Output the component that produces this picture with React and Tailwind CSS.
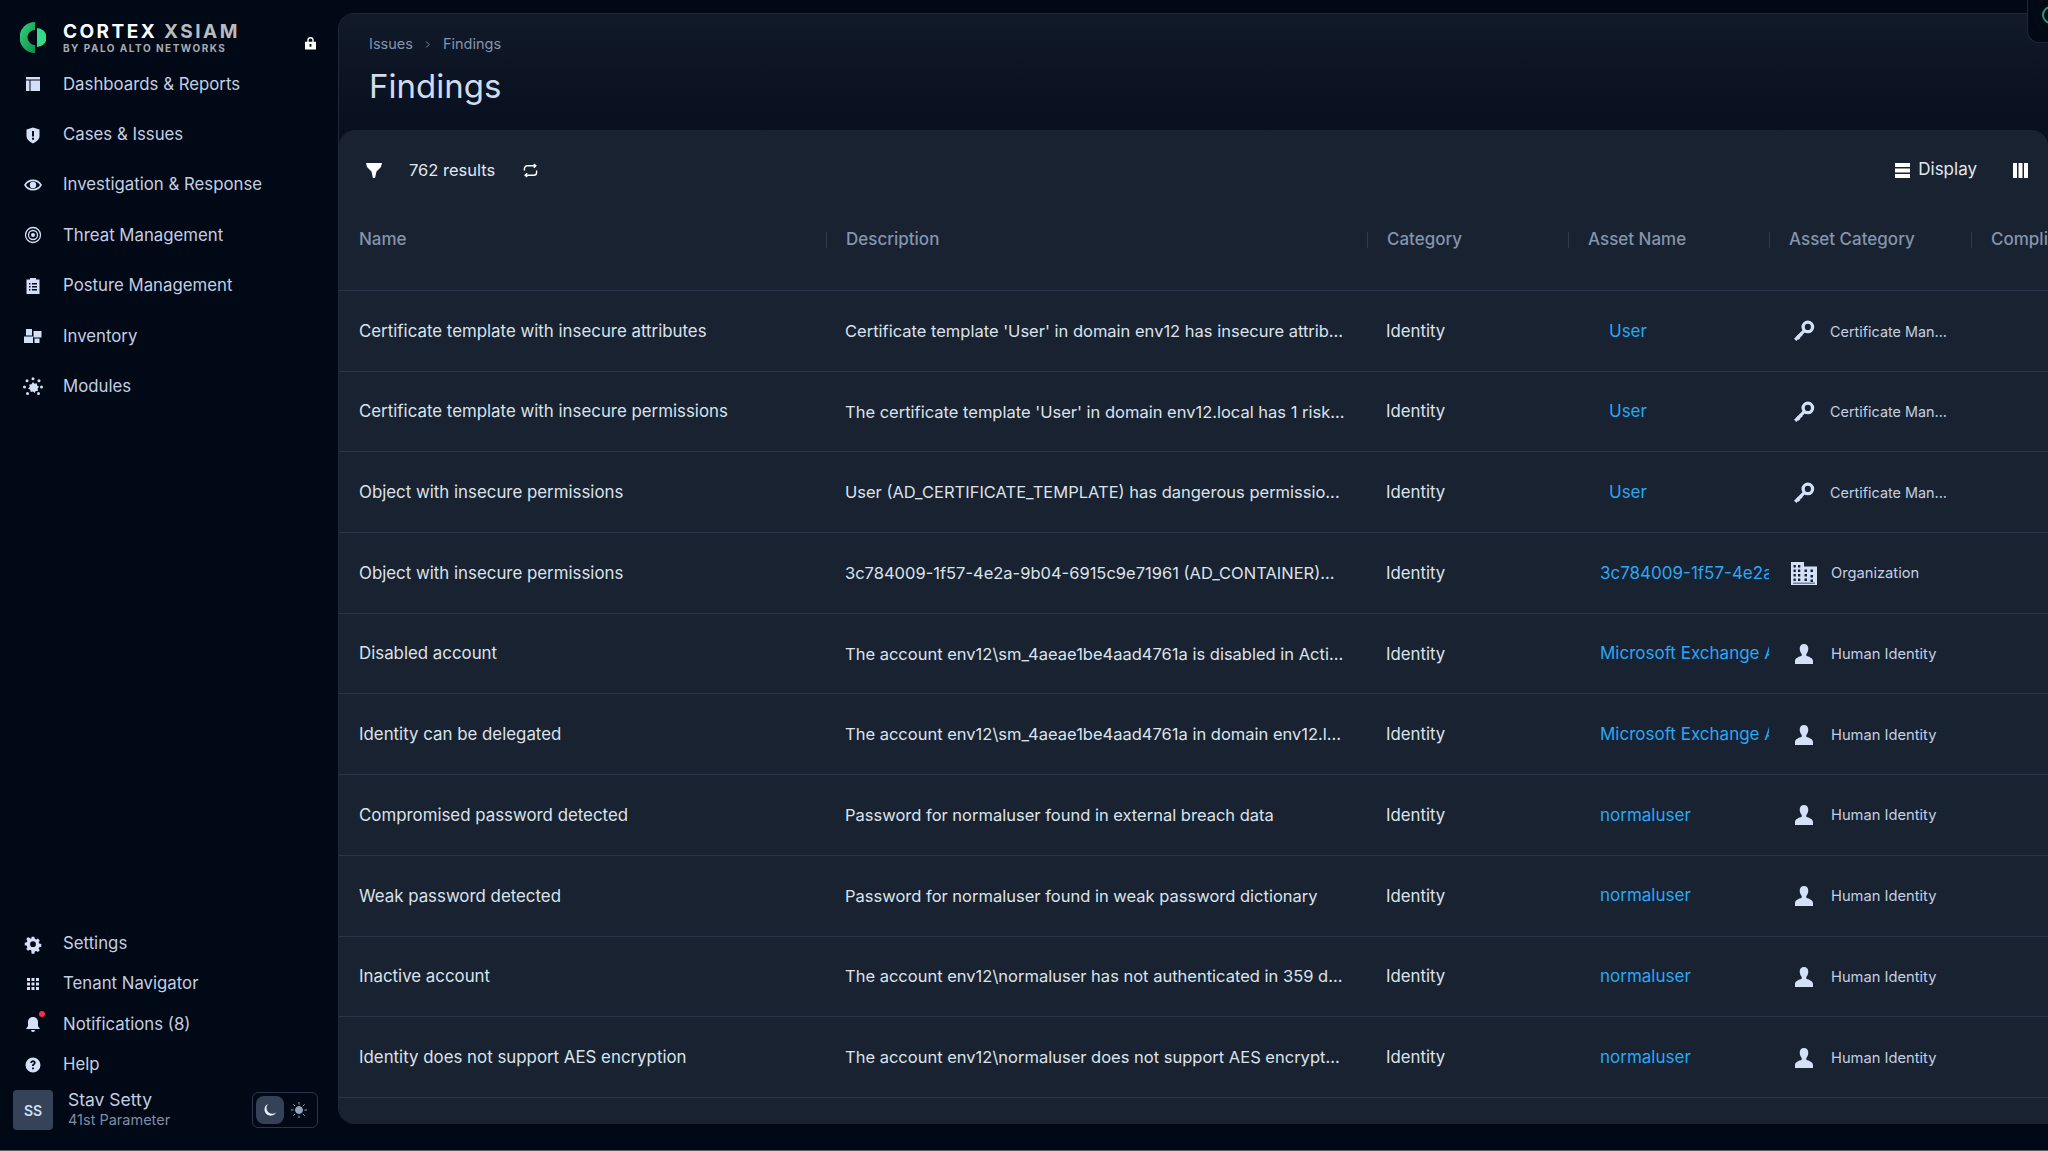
import React from "react";

const FONT = "font-['Inter','Liberation_Sans',sans-serif]";

const I = ({ children, className = "w-5 h-5", vb = "0 0 20 20" }) => (
  <svg viewBox={vb} className={className} fill="currentColor">
    {children}
  </svg>
);

const navTop = [
  {
    label: "Dashboards & Reports",
    icon: (
      <I>
        <path d="M3 3h14v2.500H3zM3 6.500h3.500V17H3zM7.500 6.500H17V17H7.500z" />
      </I>
    ),
  },
  {
    label: "Cases & Issues",
    icon: (
      <I>
        <path
          fillRule="evenodd"
          d="M10 2.500l6.500 2v6.500c0 3.500-3 5.500-6.500 7.500-3.500-2-6.500-4-6.500-7.500V4.500zM9 6h2v5.500H9zM9 12.800h2v2H9z"
        />
      </I>
    ),
  },
  {
    label: "Investigation & Response",
    icon: (
      <I>
        <path
          fillRule="evenodd"
          d="M1 10c2-3.800 5.200-5.500 9-5.500s7 1.700 9 5.500c-2 3.800-5.200 5.500-9 5.500S3 13.800 1 10zm2 0c1.700 2.600 4 3.800 7 3.800s5.300-1.200 7-3.800c-1.700-2.600-4-3.800-7-3.800S4.700 7.400 3 10z"
        />
        <circle cx="10" cy="10" r="3.200" />
      </I>
    ),
  },
  {
    label: "Threat Management",
    icon: (
      <I>
        <circle cx="10" cy="10" r="7.500" fill="none" stroke="currentColor" strokeWidth="1.300" />
        <circle cx="10" cy="10" r="4.500" fill="none" stroke="currentColor" strokeWidth="1.300" />
        <circle cx="10" cy="10" r="2" />
      </I>
    ),
  },
  {
    label: "Posture Management",
    icon: (
      <I>
        <path
          fillRule="evenodd"
          d="M7 2h6v1.500h3.500V18h-13V3.500H7zM6 7v1.500h1.500V7zm3 0v1.500h5V7zM6 10v1.500h1.500V10zm3 0v1.500h5V10zM6 13v1.500h1.500V13zm3 0v1.500h5V13z"
        />
      </I>
    ),
  },
  {
    label: "Inventory",
    icon: (
      <I>
        <path d="M3 9.500h6V3H3zM1 10.500h9V17H1zM10.500 5h8v6.500h-8zM11.500 12.500h5V17h-5z" />
      </I>
    ),
  },
  {
    label: "Modules",
    icon: (
      <I>
        <path d="M10 5l1.500 1.700 2.300-.5.300 2.300 2 1.200-1.500 1.800.5 2.300-2.300.2-1.300 2-1.500-1.500-2.300.5-.5-2.300-2-1.200 1.500-1.800-.5-2.300 2.300-.2z" />
        <circle cx="10" cy="1.800" r="1.500" />
        <circle cx="4" cy="3.800" r="1.500" />
        <circle cx="16" cy="3.800" r="1.500" />
        <circle cx="1.500" cy="10" r="1.500" />
        <circle cx="18.500" cy="10" r="1.500" />
        <circle cx="4.500" cy="16.500" r="1.500" />
        <circle cx="15.500" cy="16.500" r="1.500" />
      </I>
    ),
  },
];

const navBottom = [
  {
    label: "Settings",
    icon: (
      <I>
        <path
          fillRule="evenodd"
          d="M8.500 2h3l.5 2.300 1.500.7 2-1.200 2 2.200-1.200 2 .6 1.500 2.300.5v3l-2.300.5-.6 1.500 1.200 2-2 2-2-1.200-1.500.6-.5 2.300h-3L8 16.900l-1.500-.6-2 1.200-2-2 1.200-2-.6-1.500-2.300-.5v-3l2.300-.5.6-1.500-1.200-2 2-2.200 2 1.200L8 4.300zM10 7a3.200 3.200 0 100 6.400A3.200 3.200 0 0010 7z"
          transform="translate(1 1) scale(.9)"
        />
      </I>
    ),
  },
  {
    label: "Tenant Navigator",
    icon: (
      <I>
        <path d="M4 4h3v3H4zM8.500 4h3v3h-3zM13 4h3v3h-3zM4 8.500h3v3H4zM8.500 8.500h3v3h-3zM13 8.500h3v3h-3zM4 13h3v3H4zM8.500 13h3v3h-3zM13 13h3v3h-3z" />
      </I>
    ),
  },
  {
    label: "Notifications (8)",
    dot: true,
    icon: (
      <I>
        <path d="M10 3c3 0 5 2.200 5 5v4l2 3H3l2-3V8c0-2.800 2-5 5-5zM8 16h4a2 2 0 01-4 0z" />
      </I>
    ),
  },
  {
    label: "Help",
    icon: (
      <I>
        <path
          fillRule="evenodd"
          d="M10 2.500a7.500 7.500 0 110 15 7.500 7.500 0 010-15zM7.300 8h1.800c0-.6.400-1 .9-1s.9.300.9.800c0 1-2 1.200-2 3.200h1.800c0-1.400 2-1.600 2-3.300C12.700 6.200 11.500 5.300 10 5.300S7.400 6.300 7.300 8zm1.800 4.500v1.800h1.800v-1.800z"
        />
      </I>
    ),
  },
];

const KeyIcon = () => (
  <svg viewBox="0 0 20 20" className="w-[22px] h-[22px]" fill="none" stroke="currentColor">
    <circle cx="13.500" cy="6.300" r="4.300" strokeWidth="3" />
    <path d="M10.500 9.500L2 18" strokeWidth="3" />
    <path d="M3.500 14.500l2.500 2.500M6 12.500l2 2" strokeWidth="2.500" />
  </svg>
);

const OrgIcon = () => (
  <svg viewBox="0 0 26 23" className="w-[26px] h-[23px]" fill="currentColor">
    <path
      fillRule="evenodd"
      d="M0 0h13v4.500h13V23H0zM2.500 3v2.500h2.300V3zm4.500 0v2.500h2.300V3zM2.500 7.500V10h2.300V7.500zm4.500 0V10h2.300V7.500zm6.500 0V10h2.500V7.500zm6 0V10H22V7.500zM2.500 12v2.500h2.300V12zm4.500 0v2.500h2.300V12zm6.500 0v2.500h2.500V12zm6 1v2.500H22V13zM2.500 16.500V19h2.300v-2.500zm4.500 0V19h2.300v-2.500zm6.500 0V19h2.500v-2.500zm6 1V20H22v-2.500zM2 20.800v.700h22v-.700z"
    />
  </svg>
);

const PersonIcon = () => (
  <svg viewBox="0 0 20 20" className="w-[20px] h-[20px]" fill="currentColor">
    <path d="M10 0c2.700 0 4.300 2 4.300 4.700 0 2.200-1 4-2 5.200v1.800c2.700 1 6.700 2.300 6.700 5.300V20H1v-3c0-3 4-4.300 6.700-5.300V9.900c-1-1.200-2-3-2-5.200C5.700 2 7.300 0 10 0z" />
  </svg>
);

const columns = [
  { label: "Name", w: "w-[487px]" },
  { label: "Description", w: "w-[541px]" },
  { label: "Category", w: "w-[201px]" },
  { label: "Asset Name", w: "w-[201px]" },
  { label: "Asset Category", w: "w-[202px]" },
  { label: "Compliance", w: "w-[200px]" },
];

const rows = [
  ["Certificate template with insecure attributes", "Certificate template 'User' in domain env12 has insecure attrib...", "User", "key", "Certificate Man..."],
  ["Certificate template with insecure permissions", "The certificate template 'User' in domain env12.local has 1 risk...", "User", "key", "Certificate Man..."],
  ["Object with insecure permissions", "User (AD_CERTIFICATE_TEMPLATE) has dangerous permissio...", "User", "key", "Certificate Man..."],
  ["Object with insecure permissions", "3c784009-1f57-4e2a-9b04-6915c9e71961 (AD_CONTAINER)...", "3c784009-1f57-4e2a-9b04-6915c9e71961", "org", "Organization"],
  ["Disabled account", "The account env12\\sm_4aeae1be4aad4761a is disabled in Acti...", "Microsoft Exchange Approval Assistant", "person", "Human Identity"],
  ["Identity can be delegated", "The account env12\\sm_4aeae1be4aad4761a in domain env12.l...", "Microsoft Exchange Approval Assistant", "person", "Human Identity"],
  ["Compromised password detected", "Password for normaluser found in external breach data", "normaluser", "person", "Human Identity"],
  ["Weak password detected", "Password for normaluser found in weak password dictionary", "normaluser", "person", "Human Identity"],
  ["Inactive account", "The account env12\\normaluser has not authenticated in 359 d...", "normaluser", "person", "Human Identity"],
  ["Identity does not support AES encryption", "The account env12\\normaluser does not support AES encrypt...", "normaluser", "person", "Human Identity"],
];

const NavItem = ({ item, h }) => (
  <div className={`flex items-center pl-[23px] ${h} text-[#c3cfe2]`}>
    <div className="relative w-[20px] h-[20px] mr-[20px] text-[#d3e0f5] flex items-center justify-center">
      {item.icon}
      {item.dot && <div className="absolute -top-[3px] right-[-2px] w-[6px] h-[6px] rounded-full bg-[#f5304f]" />}
    </div>
    <span className="text-[16.800px]">{item.label}</span>
  </div>
);

const Logo = () => (
  <div className="flex items-start pl-[20px] pt-[22px] h-[59px]">
    <svg viewBox="0 0 26 31" className="w-[26px] h-[31px] mr-[17px]">
      <defs>
        <linearGradient id="lg" x1="0" y1="0" x2="1" y2="1">
          <stop offset="0" stopColor="#34d27b" />
          <stop offset="1" stopColor="#0f8f4c" />
        </linearGradient>
      </defs>
      <path d="M15 0v8a7.500 7.500 0 000 15v8A15.500 15.500 0 0115 0z" fill="url(#lg)" />
      <path d="M17 6a9.500 9.500 0 010 19z" fill="#35d987" />
    </svg>
    <div className="flex flex-col leading-none font-bold">
      <div className="text-[19px] tracking-[2.450px] leading-[19px] text-white whitespace-nowrap">
        CORTEX <span className="text-[#b9bcbf]">XSIAM</span>
      </div>
      <div className="text-[10px] tracking-[1.500px] text-[#a8abb0] mt-[2px] whitespace-nowrap">BY PALO ALTO NETWORKS</div>
    </div>
    <svg viewBox="0 0 12 14" className="w-[11px] h-[14px] text-white ml-auto mr-[22px] mt-[14px]" fill="currentColor">
      <path
        fillRule="evenodd"
        d="M2.500 5.500V4a3.500 3.500 0 017 0v1.500H12V14H0V5.500zM4 5.500h4V4a2 2 0 00-4 0zM5 8v3h2V8z"
      />
    </svg>
  </div>
);

const Sidebar = () => (
  <div className="w-[338px] shrink-0 flex flex-col">
    <Logo />
    <div>
      {navTop.map((item) => (
        <NavItem key={item.label} item={item} h="h-[50.400px]" />
      ))}
    </div>
    <div className="mt-auto">
      {navBottom.map((item) => (
        <NavItem key={item.label} item={item} h="h-[40.400px]" />
      ))}
      <div className="flex items-center pl-[13px] h-[42px] mb-[19px] mt-[4px]">
        <div className="w-[40px] h-[40px] rounded-[4px] bg-[#354359] text-[#d3e0f5] text-[14px] font-semibold flex items-center justify-center">
          SS
        </div>
        <div className="ml-[15px] w-[184px]">
          <div className="text-[17.500px] leading-[20px] text-[#c3cfe2]">Stav Setty</div>
          <div className="text-[14.500px] leading-[20px] text-[#7f8da3]">41st Parameter</div>
        </div>
        <div className="w-[66px] h-[36px] rounded-[6px] border border-[#29354a] flex items-center p-[3px]">
          <div className="w-[28px] h-[28px] rounded-[8px] bg-[#344157] flex items-center justify-center text-[#e8effa]">
            <svg viewBox="0 0 16 16" className="w-[14px] h-[14px]" fill="currentColor">
              <path d="M6 1a7 7 0 109 9.500A6.500 6.500 0 016 1z" />
            </svg>
          </div>
          <div className="flex-1 flex items-center justify-center text-[#94a3b8]">
            <svg viewBox="0 0 16 16" className="w-[16px] h-[16px]" fill="none" stroke="currentColor" strokeWidth="1">
              <circle cx="8" cy="8" r="3.500" fill="currentColor" />
              <path d="M8 0v2.500M8 13.500V16M0 8h2.500M13.500 8H16M2.300 2.300l1.800 1.800M11.900 11.900l1.800 1.800M2.300 13.700l1.800-1.800M11.900 4.100l1.800-1.800" />
            </svg>
          </div>
        </div>
      </div>
    </div>
  </div>
);

const Toolbar = () => (
  <div className="flex items-center h-[80px] pl-[27px] pr-[20px] text-[#e2e8f0]">
    <svg viewBox="0 0 16 15" className="w-[16px] h-[15px] text-white" fill="currentColor">
      <path d="M0 0h16L15 4l-4.500 4.500L9 15l-2 .5L5.500 8.500 1 4z" />
    </svg>
    <span className="ml-[27px] text-[16.500px]">762 results</span>
    <svg viewBox="0 0 16 16" className="w-[15px] h-[15px] ml-[28px] text-white" fill="none" stroke="currentColor" strokeWidth="1.500">
      <path d="M1.500 8V6a3 3 0 013-3h9M11.500 1l2.200 2-2.200 2M14.500 8v2a3 3 0 01-3 3h-9M4.500 15l-2.200-2 2.200-2" />
    </svg>
    <div className="ml-auto flex items-center text-white">
      <svg viewBox="0 0 15 15" className="w-[15px] h-[15px]" fill="currentColor">
        <path d="M0 0h15v4H0zM0 5.500h15v4H0zM0 11h15v4H0z" />
      </svg>
      <span className="ml-[8px] text-[17px] text-[#e2e8f0]">Display</span>
      <svg viewBox="0 0 15 15" className="w-[15px] h-[15px] ml-[36px]" fill="currentColor">
        <path d="M0 0h4v15H0zM5.500 0h4v15h-4zM11 0h4v15h-4z" />
      </svg>
    </div>
  </div>
);

const Row = ({ r }) => (
  <div className="flex h-[80.700px] pt-[1px] items-center border-b border-[#2a3549] text-[#dbe2ec]">
    <div className={`${columns[0].w} shrink-0 pl-[20px] truncate text-[16.850px]`}>{r[0]}</div>
    <div className={`${columns[1].w} shrink-0 pl-[19px] whitespace-nowrap overflow-hidden text-[16.500px]`}>{r[1]}</div>
    <div className={`${columns[2].w} shrink-0 pl-[19px] text-[16.800px]`}>Identity</div>
    <div className={`${columns[3].w} shrink-0 pl-[32px] whitespace-nowrap overflow-hidden text-[#2aa7f5] text-[17px]`}>
      <span className={r[2] === "User" ? "pl-[9px]" : ""}>{r[2]}</span>
    </div>
    <div className={`${columns[4].w} shrink-0 pl-[20px] flex items-center text-[#d3e0f5]`}>
      <div className="w-[30px] flex justify-center">
        {r[3] === "key" ? <KeyIcon /> : r[3] === "org" ? <OrgIcon /> : <PersonIcon />}
      </div>
      {r[3] === "key" ? (
        <span className="ml-[11px] text-[14.400px] text-[#c3cfe2] whitespace-nowrap">{r[4]}</span>
      ) : (
        <span className="ml-[12px] text-[14.700px] text-[#c3cfe2] whitespace-nowrap">{r[4]}</span>
      )}
    </div>
  </div>
);

const Main = () => (
  <div className="flex-1 min-w-0 pt-[13px] pb-[26px] flex flex-col">
    <div className="relative flex-1 min-h-0 rounded-l-[16px] border-t border-l border-[#1e2839] flex flex-col bg-[#080f1e]">
      <div className="absolute top-[-14px] right-0 w-[21px] h-[43px] rounded-bl-[12px] bg-[#010816] border-l border-b border-[#1e2839] overflow-hidden z-10">
        <div className="absolute left-[14px] top-[6px] w-[20px] h-[18px] rounded-full border-2 border-[#1f9d78]" />
      </div>
      <div className="h-[116px] shrink-0 pl-[30px] rounded-tl-[16px] bg-gradient-to-b from-[#111a29] to-[#080f1e]">
        <div className="flex items-center h-[18px] mt-[21px] text-[14.500px] text-[#8494ac]">
          <span>Issues</span>
          <svg viewBox="0 0 8 10" className="w-[6px] h-[9px] mx-[12px]" fill="none" stroke="currentColor" strokeWidth="1.200">
            <path d="M1.500 1l4 4-4 4" />
          </svg>
          <span>Findings</span>
        </div>
        <h1 className="text-[33px] leading-[42px] mt-[12px] text-[#d0dcee]">Findings</h1>
      </div>
      <div className="flex-1 min-h-0 bg-[#192230] rounded-t-[16px] rounded-bl-[16px] overflow-hidden flex flex-col">
        <Toolbar />
        <div className="flex items-start pt-[22px] h-[81px] border-b border-[#2a3549] text-[#8494ac] text-[17px] font-medium overflow-hidden">
          {columns.map((c, i) => (
            <div key={c.label} className={`${c.w} shrink-0 flex items-center h-[16px] whitespace-nowrap ${i === 0 ? "pl-[20px]" : "pl-[19px] border-l border-[#2f3a4d]"}`}>
              {c.label}
            </div>
          ))}
        </div>
        {rows.map((r, i) => (
          <Row key={i} r={r} />
        ))}
      </div>
    </div>
  </div>
);

export default function App() {
  return (
    <div className={`${FONT} w-[2048px] h-[1151px] overflow-hidden bg-[#010816] flex flex-col`}>
      <div className="flex flex-1 min-h-0">
        <Sidebar />
        <Main />
      </div>
      <div className="h-[1px] bg-[#5b5f63]" />
    </div>
  );
}
